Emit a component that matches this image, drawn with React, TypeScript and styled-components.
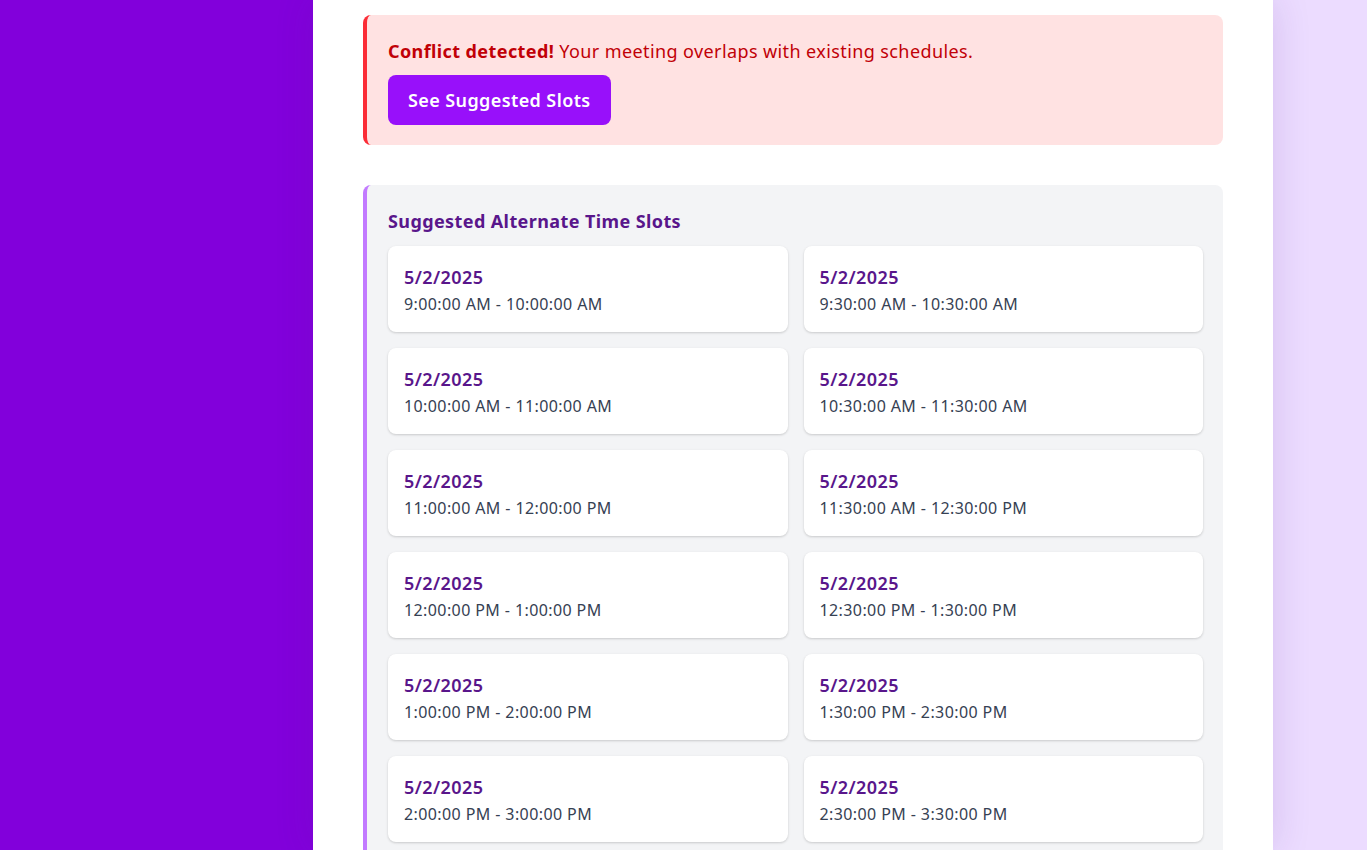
import styled, { createGlobalStyle } from "styled-components"

const GlobalStyle = createGlobalStyle`
    * {
        box-sizing: border-box;
    }
    body {
        margin: 0;
        font-family: "Noto Sans", "Open Sans", sans-serif;
        letter-spacing: 0.4px;
        background: #ecdcff;
    }
`

const Layout = styled.div`
    display: flex;
    flex-direction: row;
    height: 850px;
    overflow: hidden;
`

const Sidebar = styled.aside`
    width: 313px;
    flex-shrink: 0;
    background: #8200db;
`

const Main = styled.main`
    width: 960px;
    flex-shrink: 0;
    background: #ffffff;
    padding: 15px 50px 0 50px;
    box-shadow: 0 0 36px rgba(90, 40, 150, 0.16);
    display: flex;
    flex-direction: column;
    gap: 40px;
`

const Alert = styled.div`
    background: #ffe2e2;
    border-left: 4px solid #fb2c36;
    border-radius: 8px;
    padding: 22px 20px 20px 21px;
`

const AlertText = styled.p`
    margin: 0 0 10px 0;
    font-size: 18px;
    line-height: 28px;
    color: #c10007;

    strong {
        font-weight: 700;
    }
`

const Button = styled.button`
    height: 50px;
    padding: 0 20px;
    border: none;
    border-radius: 8px;
    background: #9810fa;
    color: #ffffff;
    font-family: inherit;
    letter-spacing: inherit;
    font-size: 18px;
    font-weight: 600;
    cursor: pointer;
`

const Suggestions = styled.section`
    background: #f3f4f6;
    border-left: 4px solid #c27aff;
    border-radius: 8px;
    padding: 22px 20px 20px 21px;
`

const Title = styled.h3`
    margin: 0 0 11px 0;
    font-size: 18px;
    line-height: 28px;
    font-weight: 700;
    color: #59168b;
`

const SlotGrid = styled.div`
    display: grid;
    grid-template-columns: 1fr 1fr;
    gap: 16px;
`

const SlotCard = styled.div`
    background: #ffffff;
    border-radius: 8px;
    padding: 17px 16px 16px 16px;
    height: 86px;
    box-shadow: 0 1px 3px rgba(0, 0, 0, 0.12), 0 1px 2px rgba(0, 0, 0, 0.06);
`

const SlotDate = styled.div`
    font-size: 18px;
    line-height: 28px;
    font-weight: 600;
    color: #59168b;
    margin-bottom: 1px;
`

const SlotTime = styled.div`
    font-size: 16px;
    line-height: 24px;
    color: #364153;
`

const slots = [
    "9:00:00 AM - 10:00:00 AM",
    "9:30:00 AM - 10:30:00 AM",
    "10:00:00 AM - 11:00:00 AM",
    "10:30:00 AM - 11:30:00 AM",
    "11:00:00 AM - 12:00:00 PM",
    "11:30:00 AM - 12:30:00 PM",
    "12:00:00 PM - 1:00:00 PM",
    "12:30:00 PM - 1:30:00 PM",
    "1:00:00 PM - 2:00:00 PM",
    "1:30:00 PM - 2:30:00 PM",
    "2:00:00 PM - 3:00:00 PM",
    "2:30:00 PM - 3:30:00 PM",
]

const App: React.FC = () => {
    return (
        <>
            <GlobalStyle />
            <Layout>
                <Sidebar />
                <Main>
                    <Alert>
                        <AlertText>
                            <strong>Conflict detected!</strong> Your meeting overlaps with existing schedules.
                        </AlertText>
                        <Button>See Suggested Slots</Button>
                    </Alert>
                    <Suggestions>
                        <Title>Suggested Alternate Time Slots</Title>
                        <SlotGrid>
                            {slots.map((time) => (
                                <SlotCard key={time}>
                                    <SlotDate>5/2/2025</SlotDate>
                                    <SlotTime>{time}</SlotTime>
                                </SlotCard>
                            ))}
                        </SlotGrid>
                    </Suggestions>
                </Main>
            </Layout>
        </>
    )
}

export default App
